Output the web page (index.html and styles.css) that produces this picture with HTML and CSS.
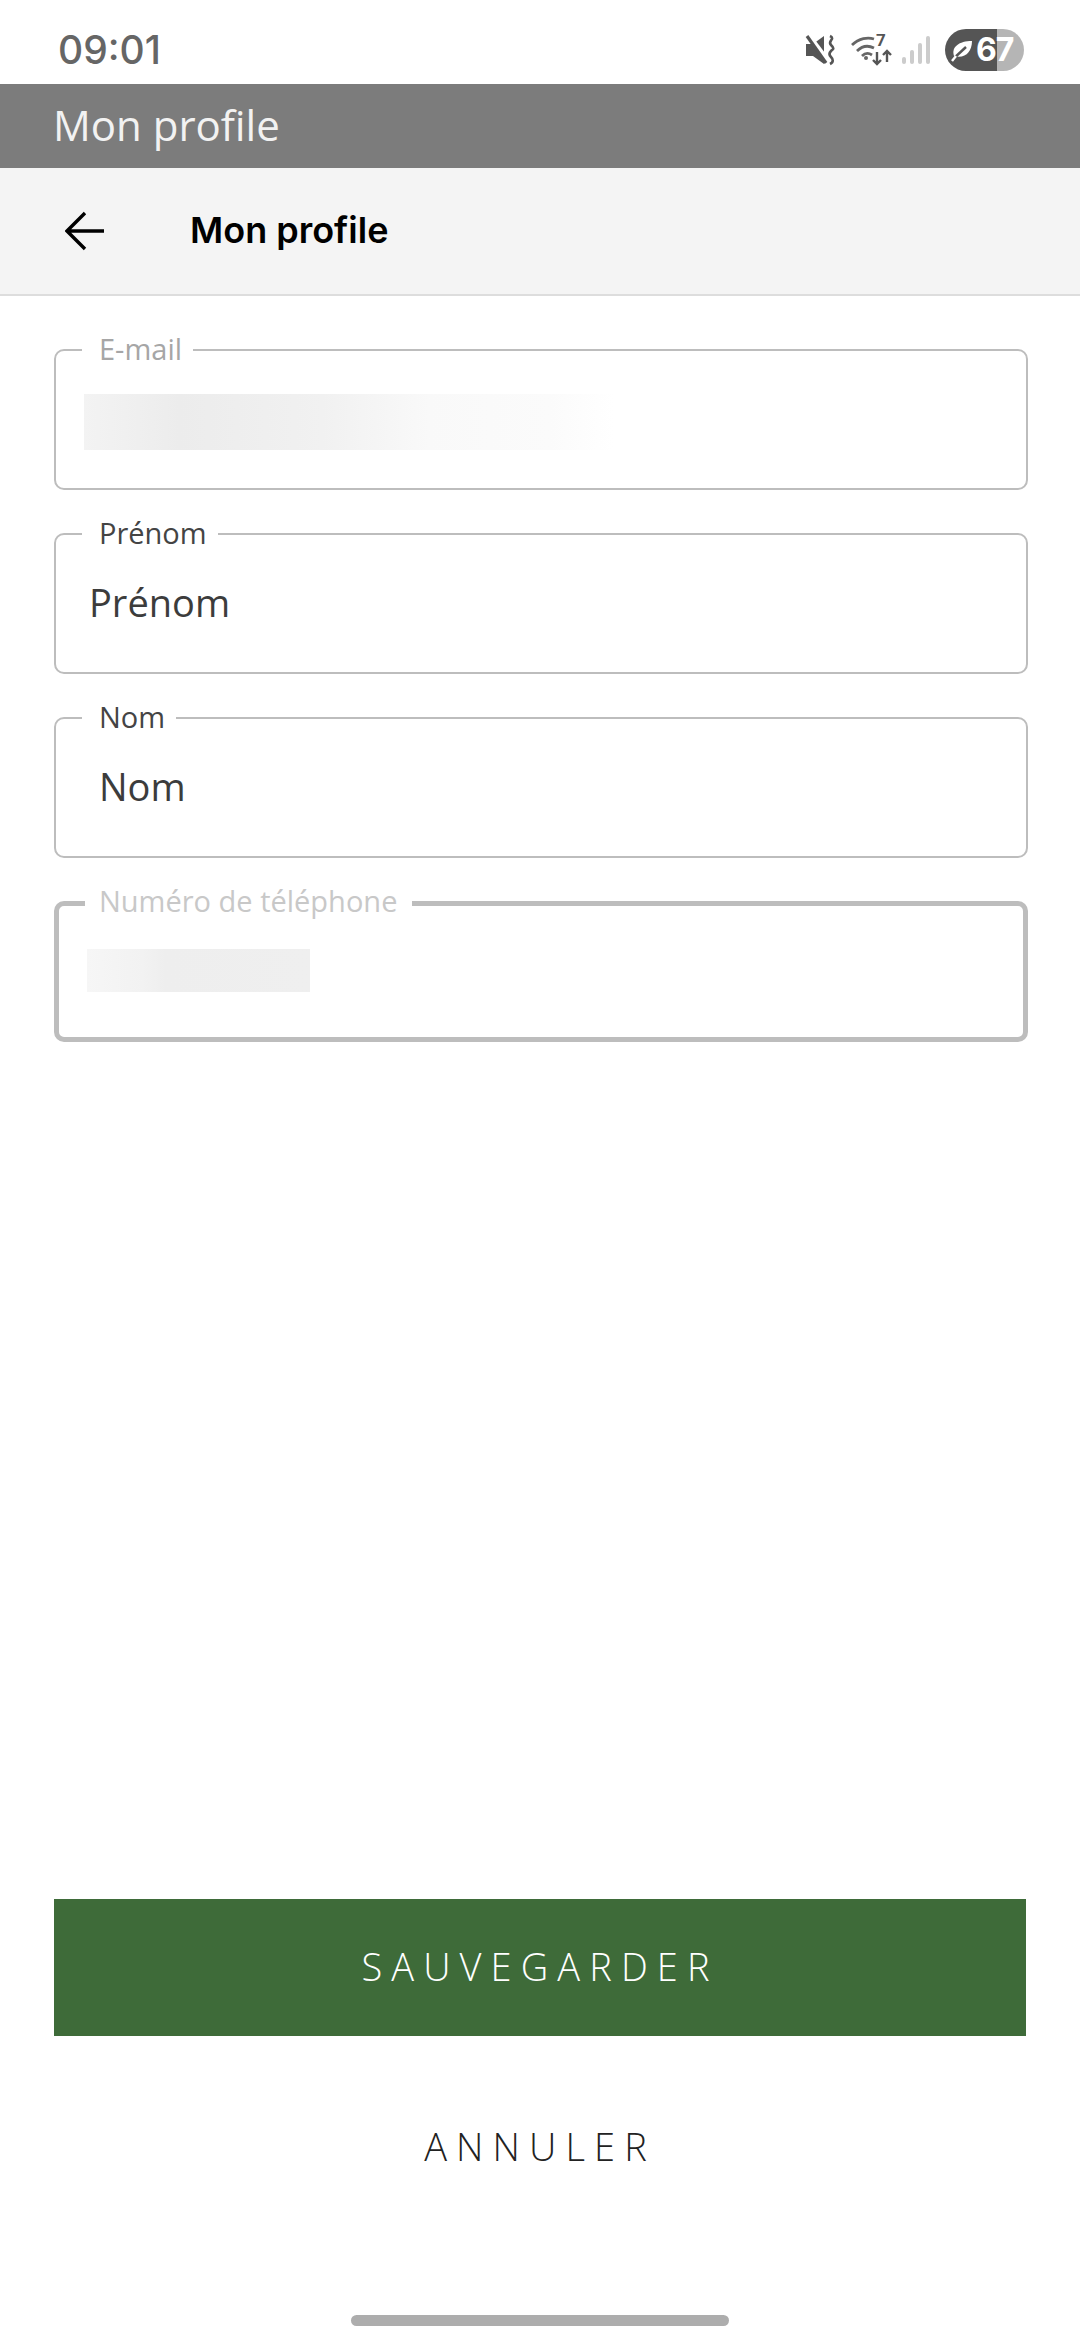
FILE: index.html
```html
<!DOCTYPE html>
<html lang="fr">
<head>
    <meta charset="UTF-8">
    <meta name="viewport" content="width=device-width, initial-scale=1.0">
    <title>Mon profile</title>
    <link rel="stylesheet" href="styles.css">
</head>
<body>
    <div class="status-bar">
        <span class="time">09:01</span>
        <div class="status-icons">
            <svg class="icon-mute" width="30" height="30" viewBox="0 0 30 30">
                <path d="M0 9h7l11-8v28l-11-8H0z" fill="#555"/>
                <path d="M3 1l19 25" stroke="#fff" stroke-width="5"/>
                <path d="M1 1l19 27" stroke="#555" stroke-width="3.2"/>
                <path d="M24 1c6 3-3 5 1 9s2 4 0 6-2 4 0 6 3 5-1 7" fill="none" stroke="#555" stroke-width="2.6"/>
            </svg>
            <svg class="icon-wifi" width="42" height="32" viewBox="0 0 42 32">
                <path d="M1 11c7-7 16-8 22-6M6 17c5-5 11-6 17-3M11 22c3-3 7-3 10-1" fill="none" stroke="#666" stroke-width="2.8"/>
                <circle cx="15" cy="24" r="2" fill="#666"/>
                <text x="25" y="12" class="wifi-num">7</text>
                <path d="M26 18v12M22 26l4 4 4-4M36 28V17M32 21l4-4 4 4" fill="none" stroke="#555" stroke-width="2.4"/>
            </svg>
            <svg class="icon-signal" width="28" height="30" viewBox="0 0 28 30">
                <rect x="0" y="22" width="4" height="7" rx="2" fill="#ccc"/>
                <rect x="8" y="15" width="4" height="14" rx="2" fill="#ccc"/>
                <rect x="16" y="8" width="4" height="21" rx="2" fill="#ccc"/>
                <rect x="24" y="1" width="4" height="28" rx="2" fill="#ccc"/>
            </svg>
            <div class="battery">
                <svg class="icon-leaf" width="22" height="24" viewBox="0 0 22 24">
                    <path d="M3 18C0 9 8 3 21 3c0 11-7 18-18 15z" fill="#fff"/>
                    <path d="M1 22L15 9" stroke="#555" stroke-width="2.4"/>
                    <path d="M1 23l4-5" stroke="#fff" stroke-width="2.4"/>
                </svg>
                <span class="battery-num">67</span>
            </div>
        </div>
    </div>

    <div class="app-bar">Mon profile</div>

    <header class="page-header">
        <svg class="back-arrow" width="40" height="40" viewBox="0 0 40 40">
            <path d="M39 20H3M20 2L2 20l18 18" fill="none" stroke="#000" stroke-width="3.4"/>
        </svg>
        <h1 class="page-title">Mon profile</h1>
    </header>

    <main class="profile-form">
        <div class="field">
            <label class="field-label label-muted">E-mail</label>
            <div class="masked masked-email"></div>
        </div>
        <div class="field">
            <label class="field-label">Prénom</label>
            <div class="field-value value-firstname">Prénom</div>
        </div>
        <div class="field">
            <label class="field-label">Nom</label>
            <div class="field-value">Nom</div>
        </div>
        <div class="field field-focus">
            <label class="field-label label-light">Numéro de téléphone</label>
            <div class="masked masked-phone"></div>
        </div>
    </main>

    <div class="actions">
        <button class="btn-save">SAUVEGARDER</button>
        <button class="btn-cancel">ANNULER</button>
    </div>

    <div class="home-bar"></div>
</body>
</html>
```

FILE: styles.css
```css
* {
    box-sizing: border-box;
}

body {
    margin: 0;
    width: 1080px;
    height: 2340px;
    background: #fff;
    font-family: "Open Sans", sans-serif;
    display: flex;
    flex-direction: column;
    overflow: hidden;
}

.status-bar {
    height: 84px;
    padding: 15px 56px 0 58px;
    display: flex;
    align-items: center;
    justify-content: space-between;
}

.time {
    font-family: Inter, sans-serif;
    font-size: 39px;
    font-weight: 500;
    color: #666;
}

.status-icons {
    display: flex;
    align-items: center;
}

.status-icons svg {
    overflow: visible;
}

.icon-mute {
    margin-right: 15px;
}

.icon-wifi {
    margin-right: 9px;
}

.icon-signal {
    margin-right: 15px;
}

.wifi-num {
    font-family: Roboto, sans-serif;
    font-size: 17px;
    font-weight: 700;
    fill: #555;
}

.battery {
    width: 79px;
    height: 42px;
    border-radius: 21px;
    background: linear-gradient(90deg, #555 0, #555 52px, #b5b5b5 52px);
    display: flex;
    align-items: center;
    padding-left: 6px;
    gap: 3px;
}

.battery-num {
    font-family: Inter, sans-serif;
    font-size: 32px;
    font-weight: 700;
    color: #fff;
    letter-spacing: -1px;
}

.app-bar {
    height: 84px;
    padding-left: 53px;
    background: #7c7c7c;
    color: #f2f2f2;
    font-size: 42px;
    line-height: 82px;
}

.page-header {
    height: 128px;
    padding: 0 0 2px 65px;
    background: #f4f4f4;
    border-bottom: 2px solid #dddddd;
    display: flex;
    align-items: center;
}

.back-arrow {
    margin: 2px 85px 0 0;
}

.page-title {
    margin: 0;
    font-family: Inter, sans-serif;
    font-size: 36px;
    font-weight: 600;
    color: #000;
}

.profile-form {
    padding: 53px 52px 0 54px;
    display: flex;
    flex-direction: column;
    gap: 43px;
}

.field {
    height: 141px;
    border: 2px solid #bdbdbd;
    border-radius: 10px;
    display: flex;
    flex-direction: column;
}

.field-label {
    align-self: flex-start;
    margin: -22px 0 0 26px;
    padding: 0 11px 0 17px;
    height: 40px;
    line-height: 40px;
    background: #fff;
    font-size: 29px;
    color: #444;
}

.label-muted {
    color: #a6a6a6;
}

.label-light {
    color: #c8c8c8;
}

.field-value {
    margin: 23px 0 0 43px;
    font-size: 38px;
    line-height: 52px;
    color: #3c3c3c;
}

.value-firstname {
    margin-left: 33px;
}

.masked {
    height: 56px;
}

.masked-email {
    width: 530px;
    margin: 25px 0 0 28px;
    background: linear-gradient(90deg, #f3f3f3 0, #ececec 18%, #f1f1f1 45%, #f9f9f9 65%, #fbfbfb 88%, #fff 100%);
}

.field-focus {
    border-width: 5px;
}

.field-focus .field-label {
    margin: -25px 0 0 26px;
    padding: 0 15px 0 14px;
}

.masked-phone {
    width: 223px;
    height: 43px;
    margin: 28px 0 0 28px;
    background: linear-gradient(90deg, #f6f6f6 0, #f2f2f2 25%, #eeeeee 35%, #efefef 100%);
}

.actions {
    margin-top: auto;
    padding: 0 54px;
    display: flex;
    flex-direction: column;
}

.btn-save,
.btn-cancel {
    border: 0;
    padding: 0 0 3px;
    font-family: "Open Sans", sans-serif;
    font-size: 38px;
    font-weight: 300;
    letter-spacing: 9.1px;
}

.btn-save {
    height: 137px;
    background: #3e6b39;
    color: #fff;
}

.btn-cancel {
    height: 88px;
    margin-top: 67px;
    background: none;
    color: #222;
}

.home-bar {
    width: 378px;
    height: 11px;
    margin: 124px auto 14px;
    border-radius: 6px;
    background: #adadad;
}
```
